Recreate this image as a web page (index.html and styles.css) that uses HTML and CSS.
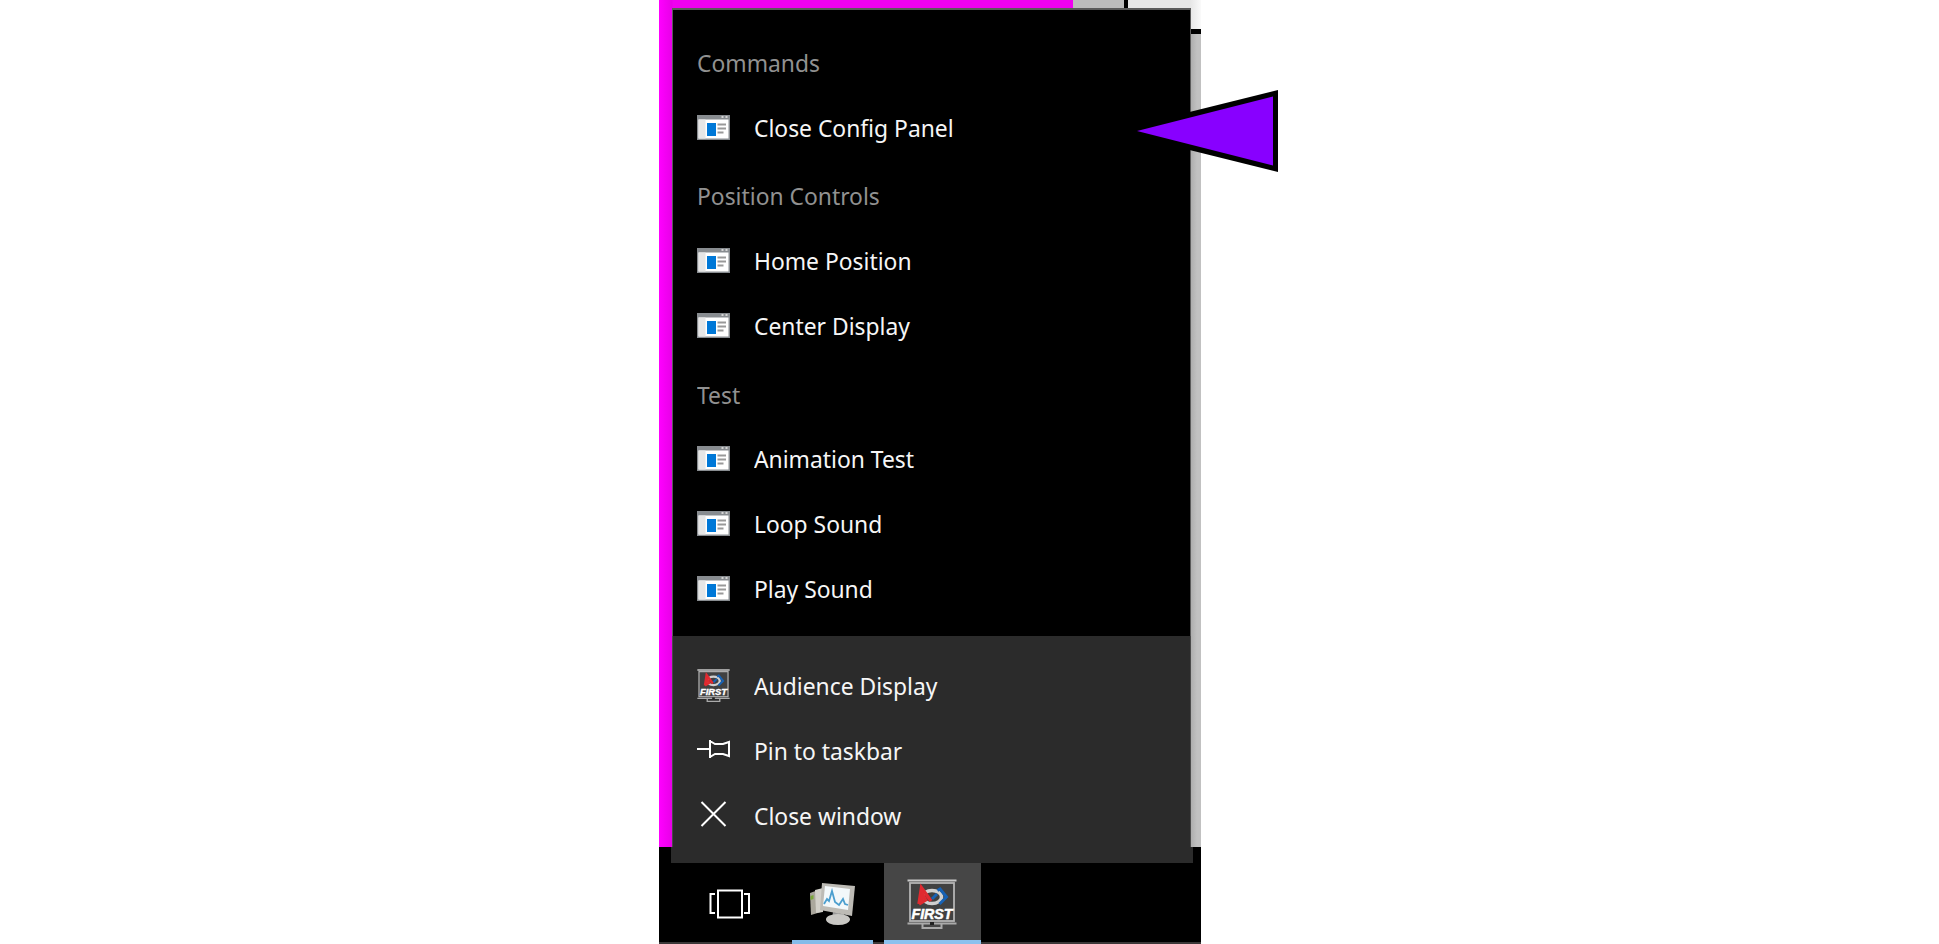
FILE: index.html
```html
<!DOCTYPE html>
<html lang="en">
<head>
<meta charset="utf-8">
<title>Audience Display</title>
<link rel="stylesheet" href="styles.css">
</head>
<body>
<svg width="0" height="0" class="defs">
  <defs>
    <symbol id="app" viewBox="0 0 33 25">
      <rect width="33" height="25" fill="#888c90"/>
      <rect x="1.5" y="4.5" width="30" height="19" fill="#fff"/>
      <rect x="1.5" y="4.5" width="7" height="19" fill="#e6e6e6"/>
      <path d="M24.5 2h2M28.500 2h2" stroke="#d5d5d5" stroke-width="2"/>
      <rect x="10" y="8" width="9" height="13" fill="#0078d7"/>
      <path d="M20.500 9.500h8.500M20.500 13.500h8.500M20.500 17.500h6" stroke="#999" stroke-width="2"/>
    </symbol>
    <symbol id="first" viewBox="0 0 50 50">
      <rect x="3" y="4" width="44" height="38" fill="#414141" stroke="#b4b4b4" stroke-width="1.800"/>
      <path d="M0.500 1.500h49" stroke="#c8c8c8" stroke-width="2"/>
      <path d="M0.500 44.500h49" stroke="#aaa" stroke-width="2"/>
      <path d="M23 43h4v3h-4z" fill="#222"/>
      <path d="M15.500 45v4h19v-4" fill="none" stroke="#aaa" stroke-width="2"/>
      <ellipse cx="25" cy="18" rx="9.500" ry="6.500" fill="none" stroke="#d0d0d0" stroke-width="3.500"/>
      <path d="M12 25L14.500 9 24 22M12 25l8-5" fill="none" stroke="#e02a30" stroke-width="3.500"/>
      <path d="M13 23l1.500-13 5 9z" fill="#e02a30"/>
      <path d="M25 20l5-5M30.500 11.500l2.500-1.500 6.500 8-7 7" fill="none" stroke="#1762b5" stroke-width="3"/>
      <text x="4.500" y="40" textLength="41" lengthAdjust="spacingAndGlyphs" class="brand">FIRST</text>
    </symbol>
  </defs>
</svg>
<main class="shot">
  <div class="desktop">
    <div class="magenta"></div>
    <div class="window"><div class="window-top"><i></i><b></b></div></div>
  </div>
  <div class="taskbar">
    <div class="task view"><svg width="42" height="30" viewBox="0 0 42 30" fill="none" stroke="#fff" stroke-width="2"><path d="M9 1.500h24v27H9zM6 5H1.500v19H6M35 5h5v19h-5"/></svg></div>
    <div class="task monitor"><svg width="46" height="44" viewBox="0 0 46 44">
      <path d="M1 11L12 7v23L2 33z" fill="#aaa79d"/><path d="M6 8l8-2v24l-7 1z" fill="#d2d0ca"/><path d="M1.500 14l3-1v4l-3 1z" fill="#7aa83a"/>
      <path d="M24 30l11 2 1 5H23z" fill="#999"/><ellipse cx="29" cy="37.500" rx="12" ry="5.500" fill="#c9c8c4"/>
      <path d="M13 1L46 4 43 34 11 28z" fill="#bdbbb5"/><path d="M16 4L41 7 39 28 14 24z" fill="#f3f8fa"/>
      <path d="M15 22l3-5 2 2 3-10 3 11 4 3 4-6 2 5 3 1" fill="none" stroke="#4c9fcf" stroke-width="1.800"/>
    </svg></div>
    <div class="task active"><svg width="50" height="50"><use href="#first"/></svg></div>
  </div>
  <nav class="menu">
    <section class="jump">
      <h2><span>Commands</span></h2>
      <div class="item"><svg class="app"><use href="#app"/></svg><span>Close Config Panel</span></div>
      <h2><span>Position Controls</span></h2>
      <div class="item"><svg class="app"><use href="#app"/></svg><span>Home Position</span></div>
      <div class="item"><svg class="app"><use href="#app"/></svg><span>Center Display</span></div>
      <h2><span>Test</span></h2>
      <div class="item"><svg class="app"><use href="#app"/></svg><span>Animation Test</span></div>
      <div class="item"><svg class="app"><use href="#app"/></svg><span>Loop Sound</span></div>
      <div class="item"><svg class="app"><use href="#app"/></svg><span>Play Sound</span></div>
    </section>
    <section class="system">
      <div class="item"><svg class="logo"><use href="#first"/></svg><span>Audience Display</span></div>
      <div class="item"><svg class="pin" viewBox="0 0 33 20" fill="none" stroke="#fff" stroke-width="2"><path d="M0 10h13M13 1v18M13 2l5 3h8l6-2v14l-6-2h-8l-5 3"/></svg><span>Pin to taskbar</span></div>
      <div class="item"><svg class="close" viewBox="0 0 33 26" fill="none" stroke="#fff" stroke-width="2"><path d="M4.500 1l24 24M28.500 1l-24 24"/></svg><span>Close window</span></div>
    </section>
    <div class="foot"></div>
  </nav>
  <svg class="pointer" width="165" height="82" viewBox="0 0 165 82"><path d="M0 41L165 0v82z"/><path d="M24 41L160 6.500v69z" fill="#80f"/></svg>
</main>
</body>
</html>
```
FILE: styles.css
```css
* { box-sizing: border-box; }
body { margin: 0; background: #fff; font-family: "Noto Sans", "Open Sans", sans-serif; overflow: hidden; }
.defs { position: absolute; }
.shot { position: relative; width: 542px; height: 944px; margin-left: 659px; display: flex; flex-direction: column; background: #000; }
.desktop { height: 847px; display: flex; }
.magenta { width: 414px; background: linear-gradient(90deg, #ff00ff, #f400f4 6px, #e800e8 13px, #f000f0 14px); }
.window { flex: 1; background: linear-gradient(90deg, #aaa 117px, #c1c1c1 124px); }
.window-top { height: 34px; border-bottom: 5px solid #000; display: flex; background: linear-gradient(90deg, #e6e6e6 117px, #fafafa); }
.window-top i { width: 51px; background: #bcbcbc; }
.window-top b { width: 4px; background: #000; }
.taskbar { height: 97px; padding-top: 16px; display: flex; background: linear-gradient(#000 95px, #3b3838 95px); }
.task { height: 81px; display: flex; justify-content: center; align-items: center; border-bottom: 4px solid transparent; }
.view { width: 97px; margin-left: 22px; }
.view svg { margin-top: 4px; }
.monitor { width: 81px; margin-left: 14px; border-color: #84bbe9; }
.monitor svg { margin: 5px 2px 0 0; }
.active { width: 97px; margin-left: 11px; background: #464646; border-color: #8cc1ee; }
.active svg { margin: 4px 1px 0 0; }
.brand { font: italic 900 14px "Liberation Sans", sans-serif; fill: #fff; stroke: #fff; stroke-width: .5px; }
.menu { position: absolute; left: 12px; top: 8px; width: 522px; height: 855px; }
.jump { height: 628px; margin: 0 2px 0 1px; padding: 20px 24px 0; background: #000; border: 1px solid #5a5a5a; border-width: 2px 1px 0; }
.system { height: 211px; margin: 0 2px 0 1px; padding: 18px 24px 0; background: #2b2b2b; border: 1px solid #4a4a4a; border-width: 0 1px; }
.foot { height: 16px; background: #2b2b2b; }
h2, .item { height: 64.8px; margin: 0; display: flex; align-items: center; font-size: 24px; font-weight: 400; line-height: 32px; white-space: nowrap; }
h2 { padding-top: 2px; color: #919191; }
.item { color: #f6f6f6; }
.item + h2 { margin-top: 4px; padding-top: 1px; }
h2:first-child + .item { padding-top: 1.5px; }
.item svg { width: 33px; flex: none; margin: 0 24px 1px 0; }
.item .app { height: 25px; }
.item .logo { height: 33px; margin-bottom: 2px; }
.item .pin { height: 20px; margin-bottom: 4px; }
.item .close { height: 26px; margin-bottom: 4px; }
span { transform: scaleX(.952); transform-origin: 0 50%; }
.pointer { position: absolute; left: 454px; top: 90px; }
```
